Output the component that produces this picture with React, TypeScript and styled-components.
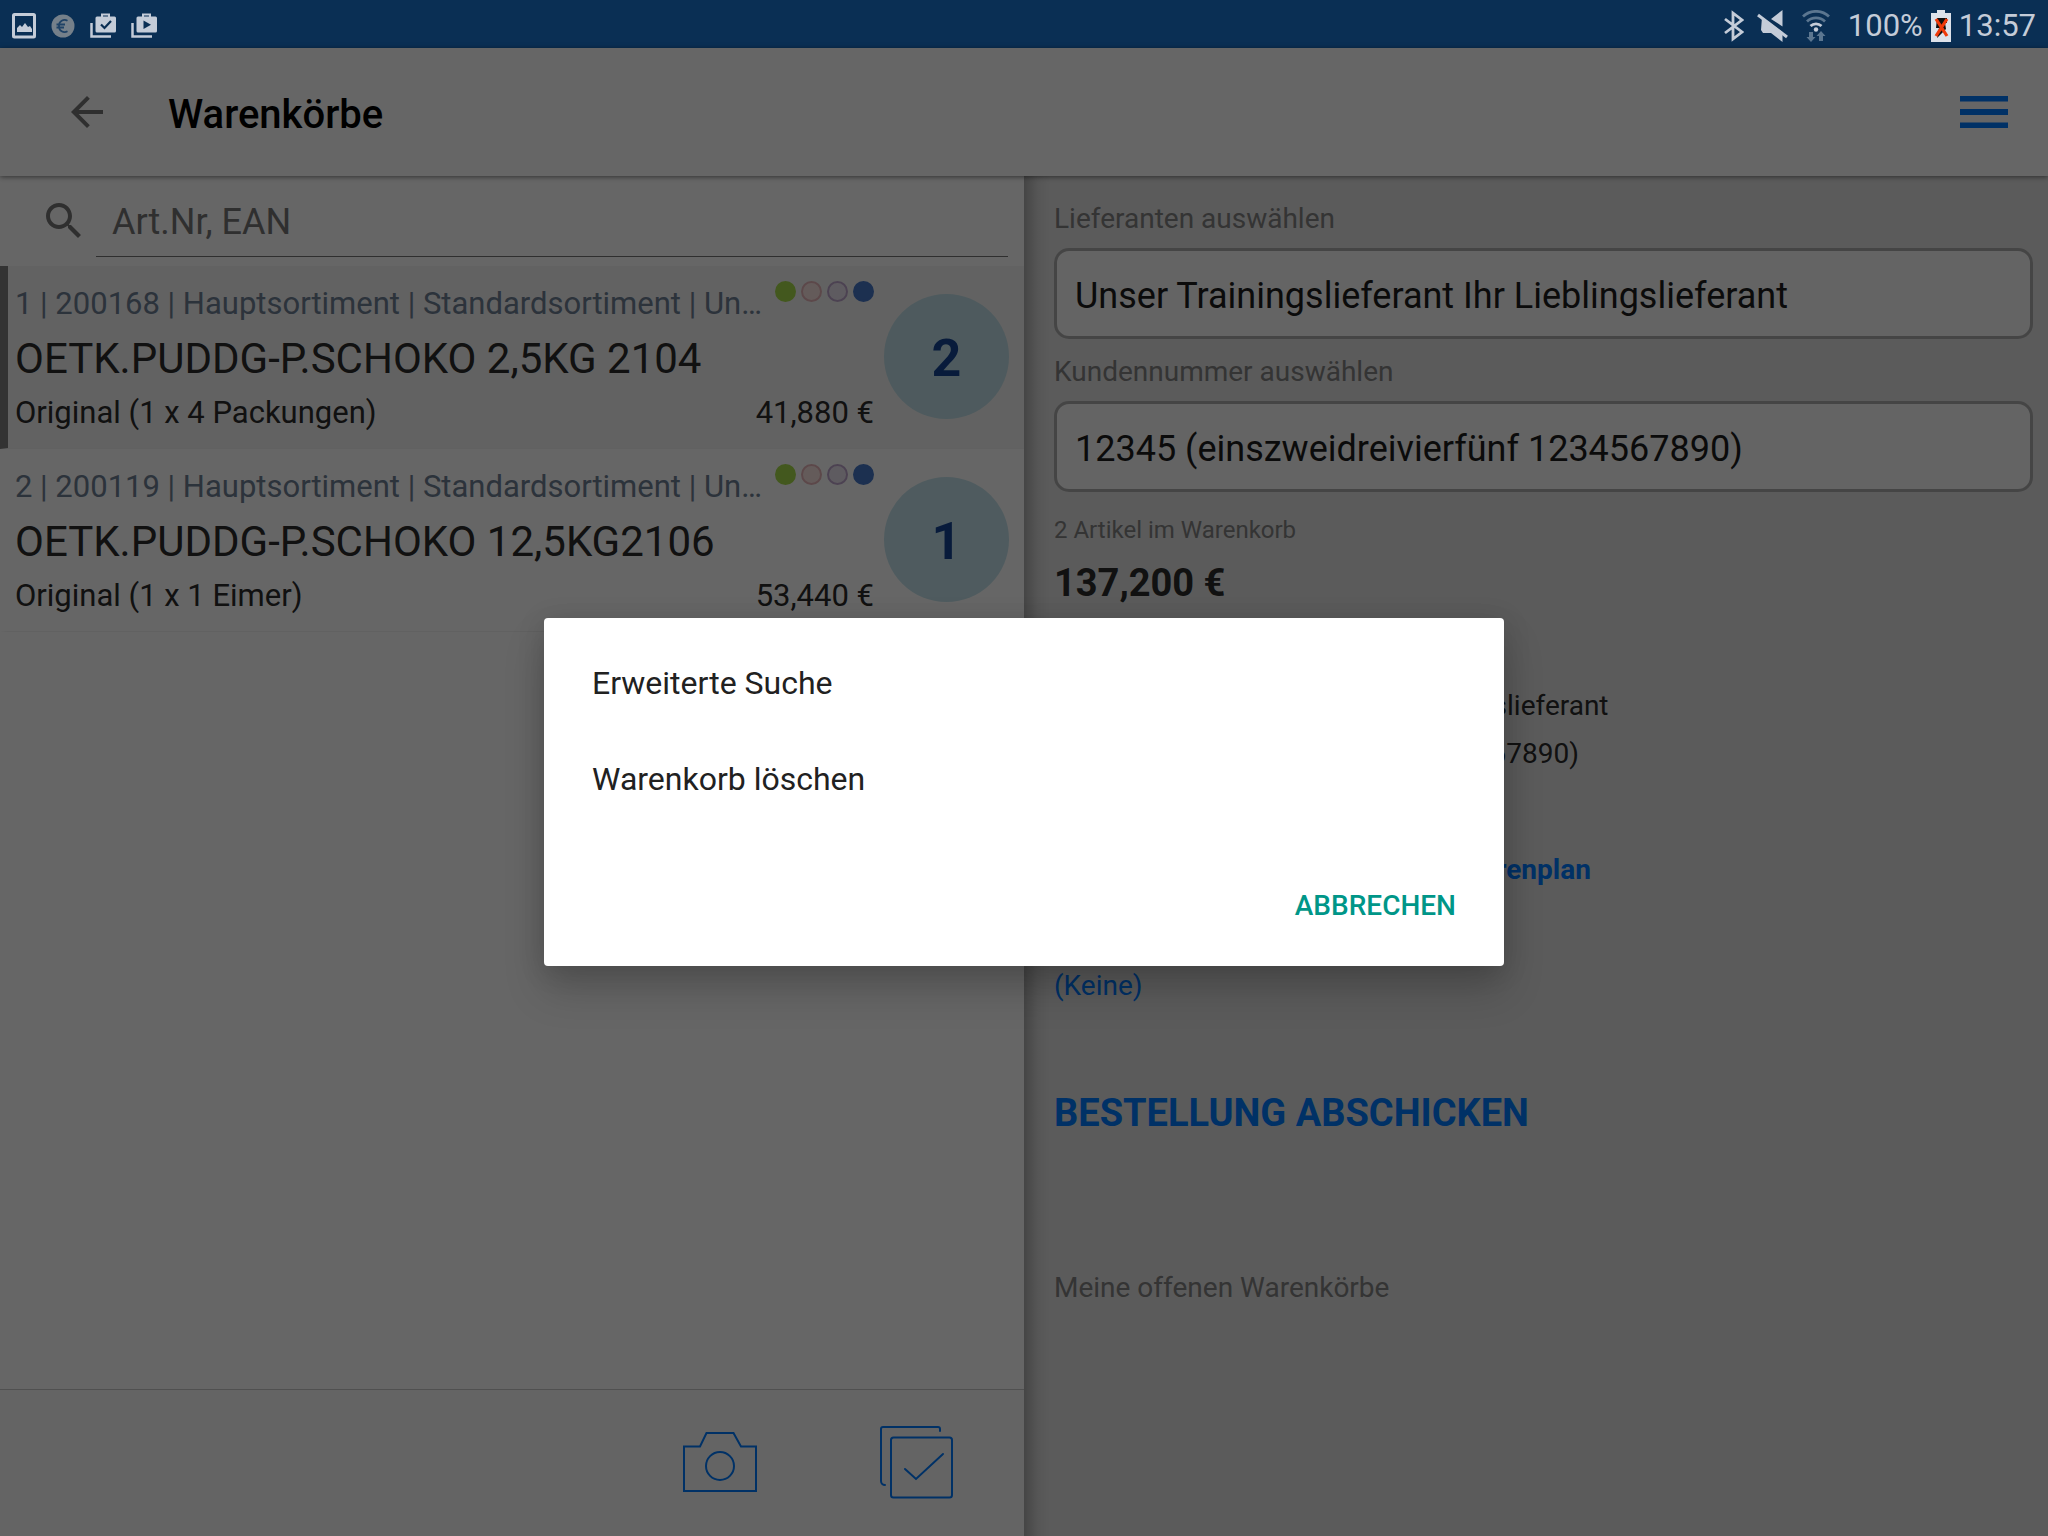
import React from "react";
import styled, { createGlobalStyle } from "styled-components";

const Global = createGlobalStyle`
  *, *::before, *::after { box-sizing: border-box; }
  body { margin: 0; font-family: Roboto, "Noto Sans", sans-serif; color: #2b2b2b; background: #fff; }
  button, input, select { font: inherit; color: inherit; border: 0; margin: 0; padding: 0; background: none; border-radius: 0; }
  button { cursor: pointer; }
  h1, h2, p, ul { margin: 0; padding: 0; }
  svg { display: block; }
`;

const Screen = styled.div`
  display: flex;
  flex-direction: column;
  min-height: 100vh;
`;

const StatusBar = styled.div`
  display: flex;
  align-items: center;
  justify-content: space-between;
  height: 48px;
  padding: 3px 12px 0;
  background: #0a2f54;
  color: #c4ccd8;
  font-size: 31px;
  line-height: 36px;
`;

const StatusGroup = styled.div<{ $gap: number }>`
  display: flex;
  align-items: center;
  gap: ${(p) => p.$gap}px;
`;

const Stage = styled.div`
  position: relative;
  flex: 1;
  display: flex;
  flex-direction: column;
`;

const Header = styled.header`
  display: flex;
  align-items: center;
  height: 128px;
  padding: 0 40px 0 63px;
  background: #fff;
  box-shadow: 0 1px 5px rgba(0, 0, 0, 0.5);
  z-index: 1;
`;

const Title = styled.h1`
  flex: 1;
  margin-left: 57px;
  padding-top: 6px;
  font-size: 40px;
  line-height: 48px;
  font-weight: 500;
  color: #000;
`;

const Columns = styled.main`
  flex: 1;
  display: grid;
  grid-template-columns: repeat(2, minmax(0, 1fr));
`;

const ListPane = styled.section`
  display: flex;
  flex-direction: column;
  background: #fff;
`;

const SearchRow = styled.label`
  display: flex;
  align-items: center;
  height: 90px;
  padding: 0 16px 0 40px;
`;

const SearchInput = styled.input`
  flex: 1;
  min-width: 0;
  height: 72px;
  margin-left: 8px;
  padding: 2px 16px 0;
  border-bottom: 1px solid #757575;
  font-size: 36px;
  outline: none;
  &::placeholder { color: #777; opacity: 1; }
`;

const Items = styled.ul`
  flex: 1;
  list-style: none;
`;

const Item = styled.li<{ $active?: boolean }>`
  display: flex;
  align-items: flex-start;
  height: 183px;
  padding: 14px 15px 0 7px;
  border-left: 8px solid ${(p) => (p.$active ? "#808080" : "transparent")};
  border-bottom: 1px solid #f2f2f2;
  background: ${(p) => (p.$active ? "#f5f5f5" : "#fff")};
  background-clip: padding-box;
`;

const ItemBody = styled.div`
  flex: 1;
  min-width: 0;
`;

const ItemLine = styled.div`
  display: flex;
  justify-content: space-between;
  gap: 10px;
`;

const Meta = styled.p`
  overflow: hidden;
  white-space: nowrap;
  text-overflow: ellipsis;
  font-size: 31px;
  line-height: 48px;
  color: #6f8095;
`;

const Name = styled.h2`
  font-size: 42px;
  line-height: 62px;
  font-weight: 400;
`;

const Detail = styled.span`
  font-size: 31px;
  line-height: 46px;
`;

const Dots = styled.span`
  display: flex;
  gap: 5px;
  padding-top: 1px;
`;

const Dot = styled.i<{ $fill: string; $line: string }>`
  width: 21px;
  height: 21px;
  border: 2px solid ${(p) => p.$line};
  border-radius: 50%;
  background: ${(p) => p.$fill};
`;

const Amount = styled.button`
  width: 125px;
  height: 125px;
  margin: 14px 0 0 10px;
  padding-top: 4px;
  border-radius: 50%;
  background: rgba(173, 216, 230, 0.7);
  color: #154594;
  font-size: 52px;
  font-weight: 700;
`;

const Toolbar = styled.footer`
  display: flex;
  justify-content: flex-end;
  height: 147px;
  padding: 0 10px 2px 0;
  border-top: 1px solid #c8c8c8;
  background: #fbfbfb;
`;

const ToolButton = styled.button`
  display: grid;
  place-items: center;
  width: 196px;
`;

const OrderPane = styled.section`
  display: flex;
  flex-direction: column;
  align-items: flex-start;
  padding: 25px 15px 24px 30px;
  background: linear-gradient(to right, rgba(0, 0, 0, 0.24), rgba(0, 0, 0, 0.06) 14px, transparent 26px) #e4e4e4;
`;

const Caption = styled.label`
  font-size: 28px;
  line-height: 36px;
  color: #828282;
`;

const Picker = styled.select`
  appearance: none;
  width: 100%;
  height: 91px;
  margin: 11px 0 15px;
  padding: 4px 18px 0;
  border: 3px solid #adadad;
  border-radius: 15px;
  background: #f9f9f9;
  color: #1c1c1c;
  font-size: 36px;
`;

const Count = styled.p`
  margin-top: 7px;
  font-size: 24px;
  line-height: 32px;
  color: #828282;
`;

const Total = styled.p`
  margin-top: 13px;
  font-size: 38px;
  line-height: 48px;
  font-weight: 700;
`;

const Summary = styled.div`
  padding-top: 75px;
  font-size: 28px;
  line-height: 48px;
`;

const TextLink = styled.a<{ $strong?: boolean }>`
  margin-top: 68px;
  font-size: 28px;
  line-height: 48px;
  font-weight: ${(p) => (p.$strong ? 700 : 400)};
  color: #007aff;
  text-decoration: none;
`;

const Submit = styled.button`
  margin-top: 79px;
  font-size: 38px;
  line-height: 48px;
  font-weight: 700;
  color: #007aff;
`;

const OpenCarts = styled.p`
  margin-top: 133px;
  font-size: 28px;
  line-height: 36px;
  color: #828282;
`;

const Scrim = styled.div`
  position: absolute;
  inset: 0;
  z-index: 2;
  display: grid;
  place-items: center;
  background: rgba(0, 0, 0, 0.6);
`;

const Dialog = styled.div`
  display: flex;
  flex-direction: column;
  width: 960px;
  max-width: 90%;
  padding: 16px 0 25px;
  border-radius: 4px;
  background: #fff;
  box-shadow: 0 24px 40px rgba(0, 0, 0, 0.18), 0 4px 28px rgba(0, 0, 0, 0.14);
`;

const Option = styled.button`
  height: 96px;
  padding: 2px 48px 0;
  text-align: left;
  font-size: 32px;
  color: #212121;
`;

const Cancel = styled.button`
  align-self: flex-end;
  height: 72px;
  margin: 43px 32px 0;
  padding: 0 16px;
  font-size: 28px;
  font-weight: 500;
  color: #009688;
`;

const products = [
  { meta: "1 | 200168 | Hauptsortiment | Standardsortiment | Unser Trainingslieferant", name: "OETK.PUDDG-P.SCHOKO 2,5KG 2104", unit: "Original (1 x 4 Packungen)", price: "41,880 €", amount: 2 },
  { meta: "2 | 200119 | Hauptsortiment | Standardsortiment | Unser Trainingslieferant", name: "OETK.PUDDG-P.SCHOKO 12,5KG2106", unit: "Original (1 x 1 Eimer)", price: "53,440 €", amount: 1 },
];

const dots = [
  { fill: "#a9dc4c", line: "#a9dc4c" },
  { fill: "#fbe4e2", line: "#e6b4b8" },
  { fill: "#ece4f0", line: "#bfa6cc" },
  { fill: "#4778c8", line: "#4778c8" },
];

const supplier = "Unser Trainingslieferant Ihr Lieblingslieferant";

const PictureIcon = () => (
  <svg width="24" height="26" viewBox="0 0 24 26" fill="none">
    <rect x="1.5" y="1.5" width="21" height="22.5" rx="1" stroke="currentColor" strokeWidth="3" />
    <path d="M5 19v-4l3-3 2 2 3-4 3 4 2-1 2 3v3z" fill="currentColor" />
  </svg>
);

const EuroIcon = () => (
  <svg width="24" height="24" viewBox="0 0 24 24" fill="none">
    <circle cx="12" cy="12" r="11.5" fill="#75808a" />
    <path d="M16.500 6.800A5.600 5.600 0 0 0 8 12a5.600 5.600 0 0 0 8.500 5.200M5.500 10.500h8.500M5.500 13.500h7.500" stroke="#1f4266" strokeWidth="1.800" />
  </svg>
);

const BagIcon = ({ play }: { play?: boolean }) => (
  <svg width="26" height="25" viewBox="0 0 26 25" fill="none">
    <path d="M1.500 10v13.500H21" stroke="currentColor" strokeWidth="2.500" />
    <path d="M12 4V1.500h7V4" stroke="currentColor" strokeWidth="2" />
    <rect x="5.500" y="3.500" width="20.500" height="16" rx="1.500" fill="currentColor" />
    {play ? <path d="M12.500 7.500v8.500l7.500-4.200z" fill="#0a2f54" /> : <path d="M11 11.500l3.500 3.500 6.500-7" stroke="#0a2f54" strokeWidth="2.200" />}
  </svg>
);

const BluetoothIcon = () => (
  <svg width="20" height="32" viewBox="0 0 20 32" fill="none" stroke="currentColor" strokeWidth="2.800">
    <path d="M1 9l17 13-9 7V3l9 7L1 23" />
  </svg>
);

const MuteIcon = () => (
  <svg width="32" height="32" viewBox="0 0 32 32" fill="none">
    <path d="M25.500 0v16.500L14 9zM5 7l20.500 15v10L14 23H6l-2-3z" fill="currentColor" />
    <path d="M1 5l29 22" stroke="currentColor" strokeWidth="3" />
  </svg>
);

const WifiIcon = () => (
  <svg width="28" height="32" viewBox="0 0 28 32" fill="none">
    <path d="M1 6.500a19 19 0 0 1 26 0M5 11.500a13 13 0 0 1 18 0" stroke="#5b7690" strokeWidth="2.800" />
    <path d="M8.500 16a8 8 0 0 1 11 0" stroke="currentColor" strokeWidth="2.800" />
    <circle cx="14" cy="19.500" r="2.200" fill="currentColor" />
    <path d="M7 22h4v5h2.500L9 32l-4.500-5H7zM17 31h4v-5h2.500L19 21l-4.500 5H17z" fill="#5b7690" />
  </svg>
);

const BatteryIcon = () => (
  <svg width="20" height="32" viewBox="0 0 20 32" fill="none">
    <path d="M6 0h8v3h6v29H0V3h6z" fill="#dde2ea" />
    <path d="M6 8h10v5h-2l1 6-9 9 2-10H5z" fill="#111" />
    <path d="M5 9l11 17M16 9L5 26" stroke="#f03a0a" strokeWidth="3.200" />
  </svg>
);

const BackIcon = () => (
  <svg width="48" height="48" viewBox="0 0 24 24" fill="#757575">
    <path d="M20 11H7.830l5.590-5.590L12 4l-8 8 8 8 1.410-1.410L7.830 13H20v-2z" />
  </svg>
);

const MenuIcon = () => (
  <svg width="48" height="32" viewBox="0 0 48 32" fill="#007aff">
    <path d="M0 0h48v5.500H0zM0 13h48v6H0zM0 26.500h48V32H0z" />
  </svg>
);

const SearchIcon = () => (
  <svg width="48" height="48" viewBox="0 0 24 24" fill="#777">
    <path d="M15.500 14h-.790l-.280-.270C15.410 12.590 16 11.110 16 9.500 16 5.910 13.090 3 9.500 3S3 5.910 3 9.500 5.910 16 9.500 16c1.610 0 3.090-.590 4.230-1.570l.270.280v.790l5 4.990L20.490 19l-4.990-5zm-6 0C7.010 14 5 11.990 5 9.500S7.010 5 9.500 5 14 7.010 14 9.500 11.990 14 9.500 14z" />
  </svg>
);

const CameraIcon = () => (
  <svg width="74" height="62" viewBox="0 0 74 62" fill="none" stroke="#007aff" strokeWidth="2">
    <path d="M1 15.500h16L23.500 2h27L58 15.500h15V60H1z" />
    <circle cx="37" cy="35" r="14" />
  </svg>
);

const CheckCardsIcon = () => (
  <svg width="74" height="74" viewBox="0 0 74 74" fill="none" stroke="#007aff" strokeWidth="2" strokeLinecap="round">
    <path d="M6 60c-2 0-4-1.500-4-4V4a2 2 0 0 1 2-2h55a2 2 0 0 1 2 2v2" />
    <rect x="12" y="12.500" width="61" height="60" rx="2.500" />
    <path d="M26 44l11 10 27-25" />
  </svg>
);

export default function App() {
  return (
    <Screen>
      <Global />
      <StatusBar>
        <StatusGroup $gap={15}>
          <PictureIcon />
          <EuroIcon />
          <BagIcon />
          <BagIcon play />
        </StatusGroup>
        <StatusGroup $gap={18}>
          <StatusGroup $gap={13}>
            <BluetoothIcon />
            <MuteIcon />
            <WifiIcon />
          </StatusGroup>
          <StatusGroup $gap={8}>
            <span>100%</span>
            <BatteryIcon />
            <span>13:57</span>
          </StatusGroup>
        </StatusGroup>
      </StatusBar>

      <Stage>
        <Header>
          <button aria-label="Zurück"><BackIcon /></button>
          <Title>Warenkörbe</Title>
          <button aria-label="Menü"><MenuIcon /></button>
        </Header>

        <Columns>
          <ListPane>
            <SearchRow>
              <SearchIcon />
              <SearchInput type="search" placeholder="Art.Nr, EAN" aria-label="Art.Nr, EAN" />
            </SearchRow>
            <Items>
              {products.map((p, i) => (
                <Item key={p.name} $active={i === 0}>
                  <ItemBody>
                    <ItemLine>
                      <Meta>{p.meta}</Meta>
                      <Dots>
                        {dots.map((d) => <Dot key={d.fill} $fill={d.fill} $line={d.line} />)}
                      </Dots>
                    </ItemLine>
                    <Name>{p.name}</Name>
                    <ItemLine>
                      <Detail>{p.unit}</Detail>
                      <Detail>{p.price}</Detail>
                    </ItemLine>
                  </ItemBody>
                  <Amount>{p.amount}</Amount>
                </Item>
              ))}
            </Items>
            <Toolbar>
              <ToolButton aria-label="Kamera"><CameraIcon /></ToolButton>
              <ToolButton aria-label="Auswählen"><CheckCardsIcon /></ToolButton>
            </Toolbar>
          </ListPane>

          <OrderPane>
            <Caption htmlFor="supplier">Lieferanten auswählen</Caption>
            <Picker id="supplier"><option>{supplier}</option></Picker>
            <Caption htmlFor="customer">Kundennummer auswählen</Caption>
            <Picker id="customer"><option>12345 (einszweidreivierfünf 1234567890)</option></Picker>
            <Count>2 Artikel im Warenkorb</Count>
            <Total>137,200 €</Total>
            <Summary>
              <p>{supplier}</p>
              <p>12345, (einszweidreivierfünf 1234567890)</p>
            </Summary>
            <TextLink $strong href="#tourenplan">Lieferung am nächsten Tag per Tourenplan</TextLink>
            <TextLink href="#keine">(Keine)</TextLink>
            <Submit>BESTELLUNG ABSCHICKEN</Submit>
            <OpenCarts>Meine offenen Warenkörbe</OpenCarts>
          </OrderPane>
        </Columns>

        <Scrim>
          <Dialog role="dialog" aria-modal="true" aria-label="Warenkorb">
            <Option>Erweiterte Suche</Option>
            <Option>Warenkorb löschen</Option>
            <Cancel>ABBRECHEN</Cancel>
          </Dialog>
        </Scrim>
      </Stage>
    </Screen>
  );
}
